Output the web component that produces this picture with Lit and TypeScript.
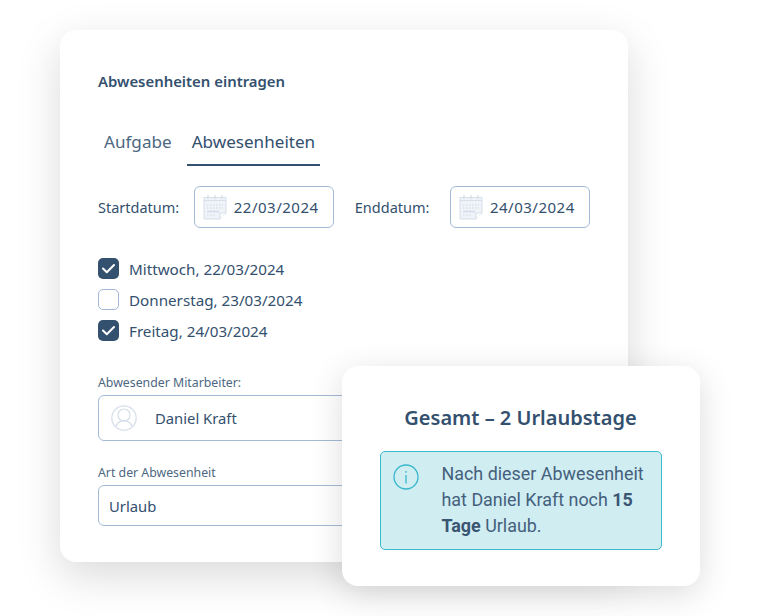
import { LitElement, html, css, svg } from "lit";
import { customElement } from "lit/decorators.js";

const calendar = html`<svg class="cal" width="24" height="26" viewBox="0 0 24 26" fill="none">
  <path d="M1 3.500h22v15.500l-6 6H1z" fill="#f0f4f9" stroke="#d6dfea" stroke-width="1"/>
  <path d="M1 6.500h22" stroke="#d6dfea"/>
  <path d="M5 1v4M12 1v4M19 1v4" stroke="#ced9e6" stroke-width="1"/>
  <path d="M23 19h-6v6" fill="#fff" stroke="#d6dfea"/>
  <path d="M4 11h16M4 14h16" stroke="#cdd8e5" stroke-dasharray="1.500 1.500"/>
  <path d="M4 17.500h12" stroke="#d3dce8" stroke-width="1.600"/>
  <path d="M4 21h8" stroke="#cdd8e5" stroke-dasharray="1.500 1.500"/>
</svg>`;

const check = svg`<path d="M5 10.500l3.800 3.800L16 7" fill="none" stroke="#fff" stroke-width="2" stroke-linecap="round" stroke-linejoin="round"/>`;

@customElement("app-root")
export class AppRoot extends LitElement {
  static styles = css`
    :host {
      display: block;
      width: 760px;
      height: 616px;
      position: relative;
      overflow: hidden;
      background: #fff;
      font-family: "Noto Sans", "Open Sans", sans-serif;
      color: #33506e;
      box-sizing: border-box;
      padding: 30px 132px 54px 60px;
    }
    .card {
      box-sizing: border-box;
      height: 532px;
      background: #fff;
      border-radius: 16px;
      box-shadow: 0 14px 44px rgba(0, 0, 0, 0.15);
      padding: 41px 38px 0;
      display: flex;
      flex-direction: column;
    }
    .title {
      font-size: 14.9px;
      font-weight: 600;
      line-height: 20px;
      color: #33506e;
    }
    .tabs {
      display: flex;
      margin-top: 38px;
      margin-left: 1px;
    }
    .tab {
      font-size: 17.1px;
      line-height: 25px;
      padding: 0 5px 10px;
      margin-right: 10px;
      color: #4c6781;
      border-bottom: 2px solid transparent;
    }
    .tab.on {
      color: #33506e;
      border-bottom-color: #33506e;
    }
    .dates {
      display: flex;
      align-items: center;
      margin-top: 20px;
      font-size: 14.5px;
    }
    .box {
      box-sizing: border-box;
      border: 1.5px solid #a4b9d4;
      border-radius: 6px;
      background: #fff;
    }
    .date {
      width: 140px;
      height: 42px;
      display: flex;
      align-items: center;
      padding-left: 7.500px;
      gap: 7px;
      margin-left: 15px;
      font-size: 15px;
      letter-spacing: 0.5px;
    }
    .date.end {
      margin-left: 21px;
    }
    .gap {
      margin-left: 21px;
    }
    .checks {
      display: flex;
      flex-direction: column;
      gap: 10px;
      margin-top: 30px;
    }
    .row {
      display: flex;
      align-items: center;
      gap: 10px;
      height: 21px;
      font-size: 15.2px;
    }
    .cb {
      width: 21px;
      height: 21px;
      box-sizing: border-box;
      border-radius: 5px;
      background: #33506e;
      display: block;
    }
    .cb.off {
      background: #fff;
      border: 1.5px solid #a4b9d4;
    }
    .lab {
      font-size: 12.3px;
      line-height: 18px;
      color: #4c6781;
    }
    .lab.a {
      margin-top: 33px;
    }
    .lab.b {
      margin-top: 23px;
    }
    .inp {
      margin-top: 3px;
      display: flex;
      align-items: center;
      font-size: 14.8px;
    }
    .inp.who {
      height: 46px;
      padding-left: 12px;
      gap: 18px;
    }
    .inp.kind {
      height: 41px;
      padding-left: 10px;
    }
    .pop {
      position: absolute;
      left: 342px;
      top: 366px;
      width: 358px;
      height: 220px;
      box-sizing: border-box;
      background: #fff;
      border-radius: 16px;
      box-shadow: 0 8px 34px rgba(0, 0, 0, 0.14);
      padding: 38px 38px 0;
    }
    .pop h2 {
      margin: 0;
      padding-right: 1px;
      text-align: center;
      font-size: 20px;
      line-height: 28px;
      font-weight: 600;
      color: #33506e;
    }
    .alert {
      box-sizing: border-box;
      margin-top: 19px;
      width: 282px;
      height: 99px;
      background: #d0edf2;
      border: 1.5px solid #3cbacd;
      border-radius: 5px;
      display: flex;
      padding: 8.500px 11.500px 0 11.500px;
      gap: 23px;
      font-family: Roboto, sans-serif;
      font-size: 17.9px;
      line-height: 26px;
      color: #44607c;
    }
    .alert svg {
      flex: none;
      margin-top: 3px;
    }
    .alert b {
      font-weight: 700;
      color: #3a5572;
    }
  `;

  render() {
    return html`
      <div class="card">
        <div class="title">Abwesenheiten eintragen</div>
        <div class="tabs">
          <div class="tab">Aufgabe</div>
          <div class="tab on">Abwesenheiten</div>
        </div>
        <div class="dates">
          <span>Startdatum:</span>
          <div class="box date">${calendar}<span>22/03/2024</span></div>
          <span class="gap">Enddatum:</span>
          <div class="box date end">${calendar}<span>24/03/2024</span></div>
        </div>
        <div class="checks">
          <div class="row"><svg class="cb" viewBox="0 0 21 21">${check}</svg>Mittwoch, 22/03/2024</div>
          <div class="row"><span class="cb off"></span>Donnerstag, 23/03/2024</div>
          <div class="row"><svg class="cb" viewBox="0 0 21 21">${check}</svg>Freitag, 24/03/2024</div>
        </div>
        <div class="lab a">Abwesender Mitarbeiter:</div>
        <div class="box inp who">
          <svg width="26" height="26" viewBox="0 0 26 26" fill="none" stroke="#d5deea" stroke-width="1.200">
            <circle cx="13" cy="13" r="12.200"/>
            <circle cx="13" cy="10" r="6"/>
            <path d="M4.500 21.800c1.400-3.800 4.800-6 8.500-6s7.100 2.200 8.500 6"/>
          </svg>
          <span>Daniel Kraft</span>
        </div>
        <div class="lab b">Art der Abwesenheit</div>
        <div class="box inp kind">Urlaub</div>
      </div>
      <div class="pop">
        <h2>Gesamt – 2 Urlaubstage</h2>
        <div class="alert">
          <svg width="26" height="26" viewBox="0 0 26 26" fill="none" stroke="#37b7cb" stroke-width="1.300">
            <circle cx="13" cy="13" r="12"/>
            <path d="M13 11v8.500M13 7v1.800"/>
          </svg>
          <div>Nach dieser Abwesenheit hat Daniel Kraft noch <b>15 Tage</b> Urlaub.</div>
        </div>
      </div>
    `;
  }
}
